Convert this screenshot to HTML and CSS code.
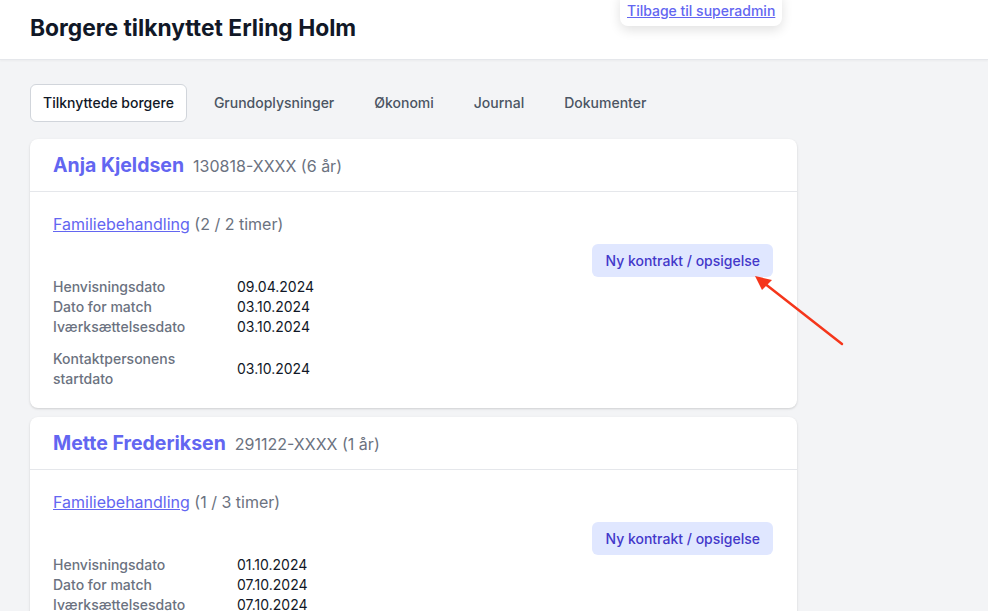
FILE: index.html
```html
<!DOCTYPE html>
<html lang="da">
<head>
    <meta charset="UTF-8">
    <meta name="viewport" content="width=device-width, initial-scale=1.0">
    <title>Borgere tilknyttet Erling Holm</title>
    <link rel="stylesheet" href="styles.css">
</head>
<body>
    <div class="back-pop">
        <a href="#">Tilbage til superadmin</a>
    </div>
    <header class="page-header">
        <h1>Borgere tilknyttet Erling Holm</h1>
    </header>
    <main class="page">
        <nav class="tabs">
            <a class="tab active" href="#">Tilknyttede borgere</a>
            <a class="tab" href="#">Grundoplysninger</a>
            <a class="tab" href="#">Økonomi</a>
            <a class="tab" href="#">Journal</a>
            <a class="tab" href="#">Dokumenter</a>
        </nav>

        <div class="card">
            <div class="card-head">
                <span class="name">Anja Kjeldsen</span>
                <span class="cpr">130818-XXXX (6 år)</span>
            </div>
            <div class="card-body">
                <p class="service"><a href="#">Familiebehandling</a> (2 / 2 timer)</p>
                <div class="actions">
                    <button class="btn-soft">Ny kontrakt / opsigelse</button>
                </div>
                <dl class="dates">
                    <dt>Henvisningsdato</dt><dd>09.04.2024</dd>
                    <dt>Dato for match</dt><dd>03.10.2024</dd>
                    <dt>Iværksættelsesdato</dt><dd>03.10.2024</dd>
                </dl>
                <dl class="dates extra">
                    <dt>Kontaktpersonens startdato</dt><dd>03.10.2024</dd>
                </dl>
            </div>
        </div>

        <div class="card">
            <div class="card-head">
                <span class="name">Mette Frederiksen</span>
                <span class="cpr">291122-XXXX (1 år)</span>
            </div>
            <div class="card-body">
                <p class="service"><a href="#">Familiebehandling</a> (1 / 3 timer)</p>
                <div class="actions">
                    <button class="btn-soft">Ny kontrakt / opsigelse</button>
                </div>
                <dl class="dates">
                    <dt>Henvisningsdato</dt><dd>01.10.2024</dd>
                    <dt>Dato for match</dt><dd>07.10.2024</dd>
                    <dt>Iværksættelsesdato</dt><dd>07.10.2024</dd>
                </dl>
                <dl class="dates extra">
                    <dt>Kontaktpersonens startdato</dt><dd>03.10.2024</dd>
                </dl>
            </div>
        </div>
    </main>

    <svg class="arrow" width="100" height="80" viewBox="0 0 100 80">
        <line x1="92" y1="72" x2="14" y2="11" stroke="#f5361b" stroke-width="2.5" stroke-linecap="round"/>
        <polygon points="5,4 22,8 12,18" fill="#f5361b"/>
    </svg>
</body>
</html>
```

FILE: styles.css
```css
*{
    margin: 0;
    padding: 0;
    box-sizing: border-box;
}
body{
    font-family: Inter, "Noto Sans", sans-serif;
    background: #f3f4f6;
    color: #111827;
    overflow: hidden;
}
.page-header{
    background: #ffffff;
    height: 60px;
    padding: 0 30px;
    display: flex;
    align-items: center;
    border-bottom: 1px solid #e5e7eb;
    box-shadow: 0 1px 2px rgba(0,0,0,0.04);
}
.page-header h1{
    font-size: 22.8px;
    font-weight: 700;
    line-height: 32px;
    margin-top: -3px;
    color: #111827;
}
.back-pop{
    position: absolute;
    left: 620px;
    top: -6px;
    background: #ffffff;
    padding: 6px 7px 5px;
    border-radius: 0 0 8px 8px;
    box-shadow: 0 4px 12px rgba(0,0,0,0.12);
    z-index: 2;
}
.back-pop a{
    color: #6366f1;
    font-size: 14px;
    font-weight: 500;
    line-height: 20px;
}
.page{
    padding: 24px 30px;
}
.tabs{
    display: flex;
    gap: 4px;
    margin-bottom: 17px;
}
.tab{
    font-size: 14px;
    font-weight: 500;
    line-height: 20px;
    color: #4b5563;
    text-decoration: none;
    padding: 8px 12px;
    margin-right: 10px;
    border: 1px solid transparent;
    border-radius: 6px;
}
.tab.active{
    background: #ffffff;
    color: #111827;
    border-color: #d1d5db;
    padding: 8px 12px 7px;
}
.card{
    max-width: 767px;
    background: #ffffff;
    border-radius: 8px;
    box-shadow: 0 1px 3px rgba(0,0,0,0.1), 0 1px 2px rgba(0,0,0,0.06);
    margin-bottom: 9px;
}
.card-head{
    display: flex;
    align-items: baseline;
    gap: 9px;
    padding: 12px 23px;
    border-bottom: 1px solid #e5e7eb;
}
.name{
    font-size: 19.5px;
    font-weight: 700;
    line-height: 28px;
    color: #6366f1;
}
.cpr{
    font-size: 16px;
    color: #6b7280;
}
.card-body{
    padding: 20px 23px 19px;
}
.service{
    font-size: 16px;
    line-height: 24px;
    color: #6b7280;
}
.service a{
    color: #6366f1;
}
.actions{
    display: flex;
    justify-content: flex-end;
    margin-top: 8px;
}
.btn-soft{
    font-family: inherit;
    font-size: 14px;
    font-weight: 500;
    line-height: 20px;
    color: #4338ca;
    background: #e0e7ff;
    border: none;
    border-radius: 6px;
    padding: 7px 13px 6px;
    margin-right: 1px;
}
.dates{
    display: grid;
    grid-template-columns: 184px 1fr;
    align-items: center;
    font-size: 14px;
    line-height: 20px;
}
.dates dt{
    color: #6b7280;
    font-weight: 500;
    padding-right: 50px;
}
.dates dd{
    color: #111827;
}
.dates.extra{
    margin-top: 12px;
}
.arrow{
    position: absolute;
    left: 750px;
    top: 272px;
}
```
